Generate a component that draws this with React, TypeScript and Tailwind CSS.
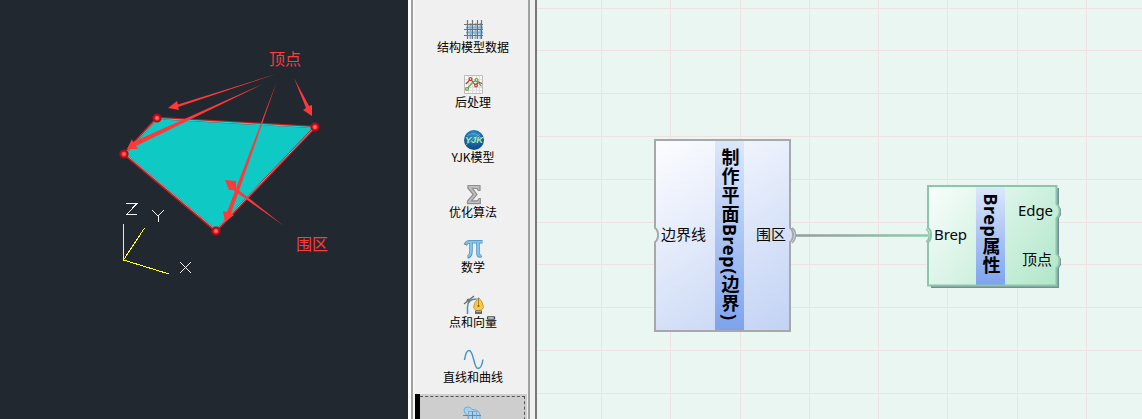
import React from "react";

const ICON = "block size-6 shrink-0 ml-0.5";

function GridIcon() {
  return (
    <svg className={ICON} viewBox="0 0 24 24">
      <g stroke="#85b4dd" strokeWidth="2">
        <path d="M4 9.5h17M4 14.5h17M8.500 5v16M13.500 5v16M18.500 5v16" />
      </g>
      <g stroke="#707174" strokeWidth="1.200">
        <path d="M2 6.500h19M2 11.500h19M2 17.500h19M5.500 2v19M10.500 2v19M15.500 2v19M19.500 2v19" />
      </g>
    </svg>
  );
}

function ChartIcon() {
  return (
    <svg className={ICON} viewBox="0 0 24 24" fill="none">
      <path d="M2.500 2.500h18v18h-18z" fill="#f7f7f7" stroke="#bdbdbd" />
      <path d="M3 6.500h17M3 10.500h17M3 14.500h17M3 17.500h17M6.500 3v17M10.500 3v17M14.500 3v17M17.500 3v17" stroke="#dddddd" />
      <path d="M4 11l4.500-5 5 6.500 3-3.500 3.500 1.500" stroke="#c53b3b" strokeWidth="1.200" />
      <path d="M5 16l5-6 4.500-3 5 6.500" stroke="#66a342" strokeWidth="1.200" />
      <g fill="#fff" strokeWidth="1.200">
        <circle cx="8.500" cy="6" r="1.400" stroke="#c53b3b" />
        <circle cx="14" cy="12.500" r="1.400" stroke="#c53b3b" />
        <circle cx="14.500" cy="7" r="1.400" stroke="#66a342" />
        <circle cx="5" cy="16" r="1.400" stroke="#66a342" />
      </g>
    </svg>
  );
}

function YjkIcon() {
  return (
    <svg className={ICON} viewBox="0 0 24 24">
      <defs>
        <radialGradient id="globe" cx=".5" cy=".25" r=".8">
          <stop stopColor="#2e91c4" />
          <stop offset="1" stopColor="#084286" />
        </radialGradient>
      </defs>
      <circle cx="12" cy="12" r="10" fill="url(#globe)" />
      <path d="M5 8q8-6 15 3M4 17q8-7 14-11" fill="none" stroke="#6cb5d7" strokeWidth=".8" />
      <text x="12" y="15" textAnchor="middle" fontFamily="Liberation Sans" fontSize="9.500" fontWeight="700" fontStyle="italic" fill="#b3e89b" textLength="18">YJK</text>
    </svg>
  );
}

function SigmaIcon() {
  return (
    <svg className={ICON} viewBox="0 0 24 24">
      <path d="M6 2.500h12v5h-1.800l-1-2h-4.700l4.500 6-5.500 6.300h6l1.500-2.300h1.300v5.200H5.500V18l5.700-6.500L5.800 5z" fill="#bdbdbd" stroke="#8f8f8f" strokeWidth="1.200" />
    </svg>
  );
}

function PiIcon() {
  return (
    <svg className={ICON} viewBox="0 0 24 24" fill="none">
      <g transform="translate(0 -.5)">
        <path d="M3.300 7.500C4.500 4.500 6 4.300 8 4.300h12.500M9 5v8q0 6-3.500 6.500M16 5v11q0 3.500 3.500 2" stroke="#4e90bf" strokeWidth="3.500" />
        <path d="M4 6.500q1-2.200 4-2.200h12M9 5v8q0 5-3 6M16 5v11q0 2.800 3 2" stroke="#83c4ee" strokeWidth="2" />
      </g>
    </svg>
  );
}

function PenIcon() {
  return (
    <svg className={ICON} viewBox="0 0 24 24" fill="none">
      <path d="M5.500 21V14q0-8 9-8" stroke="#478fb8" strokeWidth="1.500" />
      <path d="M2 11L12 3" stroke="#666" strokeWidth="1.200" />
      <circle cx="6.500" cy="7.500" r="2" fill="#777" />
      <path d="M16.500 4.500q-5 6-5 10l2.500 3h5l2.500-3q0-5-5-10z" fill="#f7c945" stroke="#b98a2c" strokeWidth=".8" />
      <path d="M16.500 5v8" stroke="#9b721f" strokeWidth=".8" />
      <circle cx="16.500" cy="13" r="1" fill="#775b25" />
      <path d="M13 17.500h7v3.500h-7z" fill="#6d695d" />
      <path d="M14 18.500h5" stroke="#b4aaa0" />
    </svg>
  );
}

function WaveIcon() {
  return (
    <svg className={ICON} viewBox="0 0 24 24" fill="none">
      <path d="M2.500 12C3.500 5 5 2.500 7 2.500c5 0 4.500 18 9 18 2.500 0 4-3 5-9" stroke="#4595c5" strokeWidth="1.500" />
    </svg>
  );
}

function RegionIcon() {
  return (
    <svg className={ICON} viewBox="0 0 24 24" fill="none">
      <path d="M3 6q0-3 4-3 3 0 4 2.500 8 0 8 6v7.500H7v-7q-4-2-4-6z" fill="#a5d0ee" stroke="#71aedb" />
      <path d="M2 11.500h18M11.500 7v13" stroke="#6b7f91" strokeWidth=".9" />
      <path d="M7.500 7.500h8v8h-8z" stroke="#6fa5cc" strokeWidth=".8" />
    </svg>
  );
}

const categories = [
  { label: "结构模型数据", icon: <GridIcon /> },
  { label: "后处理", icon: <ChartIcon /> },
  { label: "YJK模型", icon: <YjkIcon /> },
  { label: "优化算法", icon: <SigmaIcon /> },
  { label: "数学", icon: <PiIcon /> },
  { label: "点和向量", icon: <PenIcon /> },
  { label: "直线和曲线", icon: <WaveIcon /> },
];

function ModelView() {
  return (
    <section className="w-[408px] shrink-0 bg-[#222830]">
      <svg className="block h-[419px] w-[408px]" viewBox="0 0 408 419" fill="none">
        <path d="M157 118L315 127 216 231 124 154z" fill="#0ec9c4" />
        <path d="M157 118L315 127 216 231 124 154z" stroke="#c51c21" strokeWidth="2.500" />
        <path d="M157 118.500L315 127.500" stroke="#08dede" strokeWidth="1.200" />
        <path d="M315 127L216 230 124 153" stroke="#a9a3a1" strokeWidth="1" />
        <path d="M157.500 118.500L124.500 154" stroke="#45e0da" strokeWidth=".8" />
        {[[157, 118], [315, 127], [216, 231], [124, 154]].map(([x, y]) => (
          <g key={x}>
            <circle cx={x} cy={y} r="3.600" fill="#ed3035" stroke="#b90a12" strokeWidth="2" />
            <circle cx={x} cy={y} r="1.700" fill="#ff676a" />
          </g>
        ))}
        <g fill="#ff3838">
          <path d="M276 74L178 104.500 177 101 168 108 179 110 178 107z" />
          <path d="M263 84L133 142 132 139 127 149 138 149 136 146z" />
          <path d="M277 81L227 212 223 211 225 222 234 215 231 213.500z" />
          <path d="M294 78L309 106 312 105v11l-9-6 3-2z" />
          <path d="M284 226L236 188 236 181 225 180 229 190 233 190z" />
        </g>
        <path d="M123.500 224v36l21-32M123.500 260L169 274" stroke="#ffff20" shapeRendering="crispEdges" />
        <path d="M126 203.500h11L126.500 214.500H137M152 210l6 6 6-6M158.500 216v6M180 262l11 11M191 262l-11 11" stroke="#f3f3f3" shapeRendering="crispEdges" />
        <g fill="#ff3b3b" fontFamily="Noto Sans CJK SC, sans-serif" fontSize="16">
          <text x="269" y="65">顶点</text>
          <text x="296" y="250">围区</text>
        </g>
      </svg>
    </section>
  );
}

function CategoryBar() {
  return (
    <aside className="flex w-[129px] shrink-0 overflow-hidden bg-[#f0f0f0]">
      <div className="w-[3px] bg-white" />
      <div className="w-0.5 bg-[#a0a0a0]" />
      <div className="w-0.5 bg-[#f8f8f8]" />
      <div className="flex h-[419px] w-28 flex-col pt-[18px]">
        {categories.map(({ label, icon }) => (
          <div key={label} className="flex h-[55px] shrink-0 flex-col items-center pl-1">
            {icon}
            <span className="-mt-1 whitespace-nowrap text-[12px] leading-[17px]">{label}</span>
          </div>
        ))}
        <div className="-mt-[9px] flex h-[26px] shrink-0 overflow-hidden bg-[#cecece] pt-0.5">
          <div className="-mt-0.5 w-[5px] bg-black" />
          <div className="flex h-10 flex-1 justify-center border border-b-0 border-l-0 border-dashed border-[#555] pt-[7px]">
            <RegionIcon />
          </div>
          <div className="w-0.5" />
        </div>
      </div>
      <div className="ml-[1px] w-0.5 bg-[#a0a0a0]" />
      <div className="flex-1" />
      <div className="w-0.5 bg-[#777]" />
    </aside>
  );
}

function Canvas() {
  return (
    <main className="min-w-0 flex-1 overflow-hidden bg-[#eaf6f2]">
      <svg className="block h-[419px] w-[605px]" viewBox="537 0 605 419" fill="none">
        <defs>
          <linearGradient id="blueNode" gradientUnits="userSpaceOnUse" x1="655" y1="140" x2="790" y2="331"><stop stopColor="#fdfdff" /><stop offset="1" stopColor="#c1d2f4" /></linearGradient>
          <linearGradient id="greenNode" gradientUnits="userSpaceOnUse" x1="928" y1="186" x2="1057" y2="286"><stop stopColor="#f9fefc" /><stop offset="1" stopColor="#b0e6c9" /></linearGradient>
          <linearGradient id="title" x2="0" y2="1"><stop stopColor="#dce7fb" /><stop offset="1" stopColor="#7ea3ed" /></linearGradient>
          <linearGradient id="wire" gradientUnits="userSpaceOnUse" x1="796" y1="235" x2="928" y2="235"><stop stopColor="#969c9b" /><stop offset="1" stopColor="#8fc9ad" /></linearGradient>
        </defs>
        <path d="M601.500 0v419M670.500 0v419M740.500 0v419M809.500 0v419M878.500 0v419M947.500 0v419M1017.500 0v419M1086.500 0v419M537 8.500h605M537 50.500h605M537 93.500h605M537 136.500h605M537 179.500h605M537 222.500h605M537 264.500h605M537 307.500h605M537 350.500h605M537 393.500h605" stroke="#efe1e2" />
        <path d="M655 140H790V228q5 2 5 7t-5 7V331H655V242q3-2 3-7t-3-7z" fill="url(#blueNode)" />
        <path d="M715 141h29v189h-29z" fill="url(#title)" />
        <path d="M655 140H790V228q3 2 3 7t-3 7V331H655V242q3-2 3-7t-3-7z" stroke="#a6a8a9" strokeWidth="2" />
        <path d="M792 228q3.500 2 3.500 7t-3.500 8" stroke="#a6a8a9" strokeWidth="1.500" />
        <path d="M796 235.500H928" stroke="url(#wire)" strokeWidth="2.500" />
        <path d="M931 188H1059V206l2 3v6l-2 3v38l2 3v6l-2 3V288H931z" fill="#788c9b" />
        <path d="M928 186H1056.500V204q3 2 3 7t-3 7V254q3 2 3 7t-3 7V285.500H928z" fill="url(#greenNode)" />
        <path d="M976 187h29v98h-29z" fill="url(#title)" />
        <path d="M928 186H1056.500V204q3 2 3 7t-3 7V254q3 2 3 7t-3 7V285.500H928V242q3-2 3-7t-3-7z" stroke="#8bc6aa" strokeWidth="2" />
        <path d="M926 229q3 2 3 6.500t-3 6.500" stroke="#8bc6aa" strokeWidth="1.500" />
        <g fill="#080808" fontFamily="Noto Sans, Noto Sans CJK SC, sans-serif" fontSize="15">
          <text x="661" y="240" textLength="45">边界线</text>
          <text x="756" y="240" textLength="30">围区</text>
          <text x="934" y="240" textLength="33">Brep</text>
          <text x="1018" y="216" textLength="35">Edge</text>
          <text x="1022" y="265" textLength="30">顶点</text>
        </g>
        <g className="[writing-mode:vertical-rl]" fill="#000" fontFamily="Noto Sans, Noto Sans CJK SC, sans-serif" fontSize="18" fontWeight="700">
          <text x="729.5" y="148"><tspan letterSpacing="1.100">制作平面</tspan><tspan letterSpacing=".6">Brep(</tspan><tspan letterSpacing="1.300">边界</tspan>)</text>
          <text x="990.5" y="193.500"><tspan letterSpacing=".5">Brep</tspan><tspan letterSpacing="1">属性</tspan></text>
        </g>
      </svg>
    </main>
  );
}

export default function App() {
  return (
    <div className="flex h-[419px] w-[1142px] overflow-hidden bg-[#eaf6f2] font-['Noto_Sans_CJK_SC',sans-serif] text-black">
      <ModelView />
      <CategoryBar />
      <Canvas />
    </div>
  );
}
